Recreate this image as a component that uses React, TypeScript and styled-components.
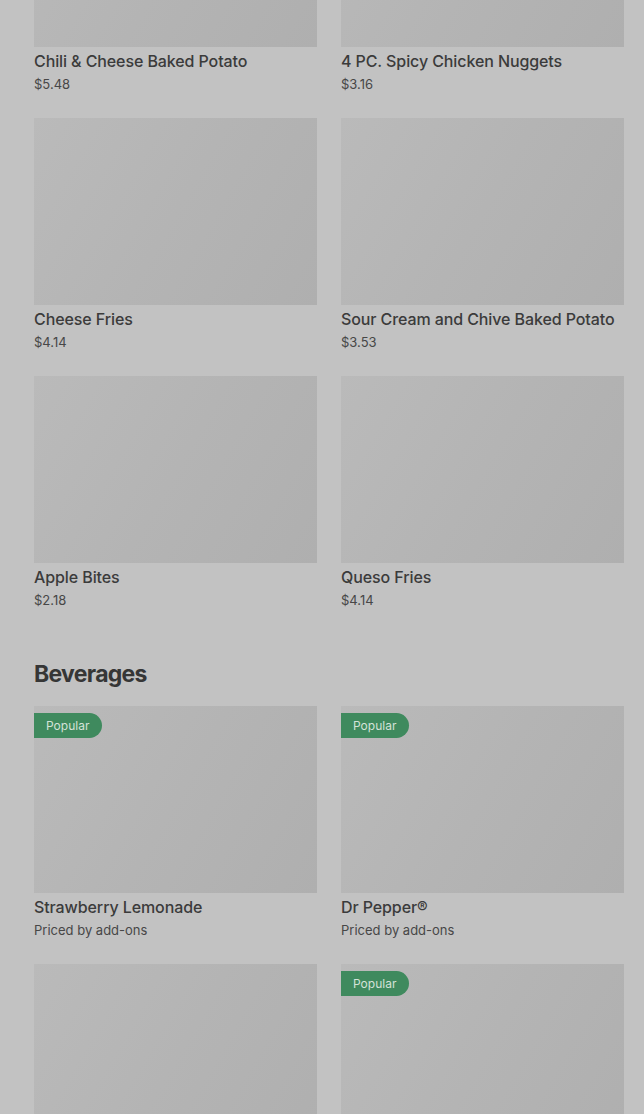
import React from 'react';
import styled, { createGlobalStyle } from 'styled-components';

type Item = {
  name: string;
  price: string;
  popular?: boolean;
};

const GlobalStyle = createGlobalStyle`
  html, body {
    margin: 0;
    padding: 0;
    background: #c2c2c2;
    overflow: hidden;
  }
  body {
    font-family: Inter, "Liberation Sans", sans-serif;
    color: #3b3b3b;
  }
`;

const Page = styled.div`
  height: 1114px;
  overflow: hidden;
  padding: 0 20px 0 34px;
`;

const Scroller = styled.div`
  margin-top: -140px;
`;

const Section = styled.section`
  & + & {
    margin-top: 48px;
  }
`;

const Heading = styled.h2`
  margin: 0 0 16px;
  font-size: 23px;
  line-height: 32px;
  font-weight: 700;
  letter-spacing: -0.7px;
  color: #363636;
`;

const Grid = styled.div`
  display: grid;
  grid-template-columns: 1fr 1fr;
  column-gap: 24px;
  row-gap: 24px;
`;

const Card = styled.div`
  display: flex;
  flex-direction: column;
`;

const Thumb = styled.div`
  position: relative;
  height: 187px;
  background: linear-gradient(120deg, #bababa 0%, #b4b4b4 50%, #afafaf 100%);
`;

const Badge = styled.span`
  position: absolute;
  top: 7px;
  left: 0;
  height: 25px;
  padding: 0 13px 0 12px;
  display: flex;
  align-items: center;
  background: #3f8a5e;
  color: #d4e2d8;
  font-size: 12px;
  border-radius: 0 12.5px 12.5px 0;
`;

const Name = styled.div`
  margin-top: 4px;
  font-size: 16px;
  line-height: 20px;
  font-weight: 500;
  letter-spacing: -0.1px;
  color: #3b3b3b;
`;

const Price = styled.div`
  margin-top: 3px;
  font-size: 13px;
  line-height: 20px;
  color: #474747;
`;

const sides: Item[] = [
  { name: 'Chili & Cheese Baked Potato', price: '$5.48' },
  { name: '4 PC. Spicy Chicken Nuggets', price: '$3.16' },
  { name: 'Cheese Fries', price: '$4.14' },
  { name: 'Sour Cream and Chive Baked Potato', price: '$3.53' },
  { name: 'Apple Bites', price: '$2.18' },
  { name: 'Queso Fries', price: '$4.14' },
];

const beverages: Item[] = [
  { name: 'Strawberry Lemonade', price: 'Priced by add-ons', popular: true },
  { name: 'Dr Pepper®', price: 'Priced by add-ons', popular: true },
  { name: 'Coca-Cola®', price: 'Priced by add-ons' },
  { name: 'Sprite®', price: 'Priced by add-ons', popular: true },
];

const MenuCard = ({ item }: { item: Item }) => (
  <Card>
    <Thumb>{item.popular && <Badge>Popular</Badge>}</Thumb>
    <Name>{item.name}</Name>
    <Price>{item.price}</Price>
  </Card>
);

export default function App() {
  return (
    <>
      <GlobalStyle />
      <Page>
        <Scroller>
          <Section>
            <Grid>
              {sides.map((item) => (
                <MenuCard key={item.name} item={item} />
              ))}
            </Grid>
          </Section>
          <Section>
            <Heading>Beverages</Heading>
            <Grid>
              {beverages.map((item) => (
                <MenuCard key={item.name} item={item} />
              ))}
            </Grid>
          </Section>
        </Scroller>
      </Page>
    </>
  );
}
